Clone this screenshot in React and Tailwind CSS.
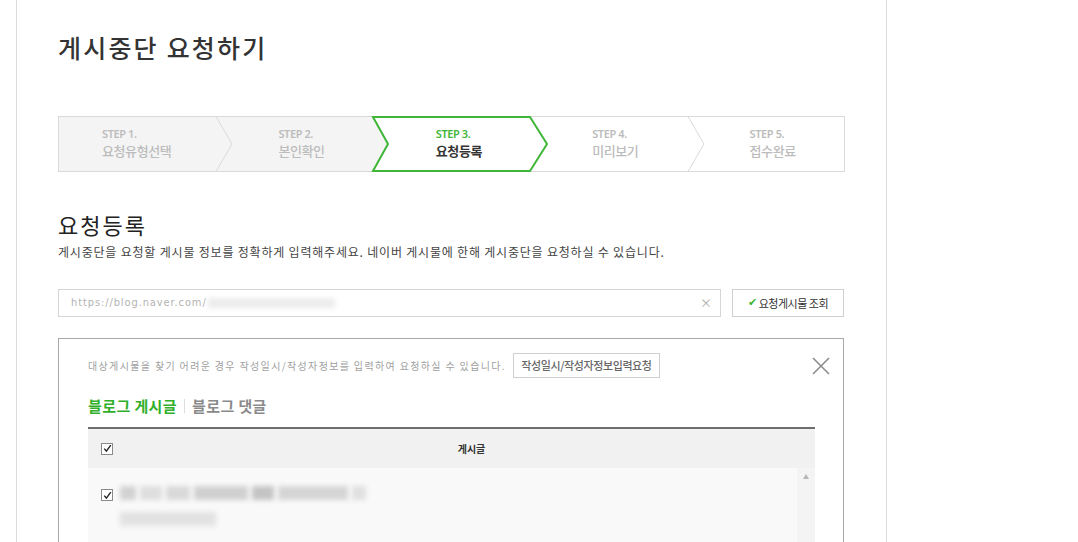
import React from "react";

const steps = [
  { no: "STEP 1.", name: "요청유형선택", pl: "pl-[44px]" },
  { no: "STEP 2.", name: "본인확인", pl: "pl-[63px]" },
  { no: "STEP 3.", name: "요청등록", pl: "pl-[63px]", active: true },
  { no: "STEP 4.", name: "미리보기", pl: "pl-[62px]" },
  { no: "STEP 5.", name: "접수완료", pl: "pl-[62px]" },
];

function StepBar() {
  return (
    <div className="relative h-[56px] w-[787px]">
      {/* chevron background */}
      <svg className="absolute inset-0" width="787" height="56" viewBox="0 0 787 56">
        <polygon points="0.5,0.5 315,0.5 330,28 315,55.5 0.5,55.5" fill="#f4f4f4" />
        <rect x="0.5" y="0.5" width="786" height="55" fill="none" stroke="#dadada" />
        <polyline points="158,0.5 174,28 158,55.5" fill="none" stroke="#dadada" />
        <polyline points="630,0.5 646,28 630,55.5" fill="none" stroke="#dadada" />
        <polygon
          points="315,1 472,1 489,28 472,55 315,55 330,28"
          fill="#fff"
          stroke="#3fb638"
          strokeWidth="2"
        />
      </svg>
      <div className="relative flex h-full">
        {steps.map((s) => (
          <div key={s.no} className={`flex w-[157.4px] shrink-0 flex-col pt-[11px] ${s.pl}`}>
            <span
              className={`text-[11px] font-semibold leading-[14px] tracking-[-0.4px] font-['Noto_Sans',sans-serif] ${
                s.active ? "text-[#3fb638]" : "text-[#bcbcbc]"
              }`}
            >
              {s.no}
            </span>
            <span
              className={`text-[13px] leading-[19px] tracking-[-0.4px] ${
                s.active ? "font-bold text-[#333]" : "font-medium text-[#bcbcbc]"
              }`}
            >
              {s.name}
            </span>
          </div>
        ))}
      </div>
    </div>
  );
}

function CheckBox() {
  return (
    <span className="flex h-[12px] w-[12px] items-center justify-center border border-[#8a8a8a] bg-white">
      <svg width="9" height="9" viewBox="0 0 9 9">
        <path d="M1.3 4.6 L3.4 7.2 L7.8 1.2" fill="none" stroke="#222" strokeWidth="1.4" />
      </svg>
    </span>
  );
}

function Blur({ w, c = "#c9c9c9" }) {
  return <span className={`h-[14px] blur-[2.5px] ${w} ${c}`} />;
}

export default function App() {
  return (
    <div className="h-[542px] w-[1078px] overflow-hidden bg-white font-['Noto_Sans_CJK_KR',sans-serif] text-[#333]">
      <div className="ml-[16px] min-h-[542px] w-[871px] border-x border-[#dcdcdc] pl-[41px]">
        <h1 className="pt-[29px] text-[25px] font-medium leading-[36px] tracking-[2.2px] text-[#333]">
          게시중단 요청하기
        </h1>

        <div className="mt-[51px]">
          <StepBar />
        </div>

        <h2 className="mt-[37px] text-[22px] font-normal leading-[30px] tracking-[2px] text-[#222]">요청등록</h2>
        <p className="mt-[5px] text-[12px] leading-[16px] tracking-[0.8px] text-[#444]">
          게시중단을 요청할 게시물 정보를 정확하게 입력해주세요. 네이버 게시물에 한해 게시중단을 요청하실 수 있습니다.
        </p>

        <div className="mt-[29px] flex w-[787px] items-center gap-[11px]">
          <div className="flex h-[28px] w-[663px] items-center border border-[#d6d6d6] pl-[12px] pr-[8px]">
            <span className="text-[11px] tracking-[0.9px] text-[#b3b3b3] font-['DejaVu_Sans_Condensed',sans-serif]">
              https://blog.naver.com/
            </span>
            <span className="ml-[1px] h-[10px] w-[127px] bg-[#ececec] blur-[2.5px]" />
            <span className="ml-auto text-[12px] text-[#aaa]">×</span>
          </div>
          <button className="flex h-[28px] w-[112px] items-center justify-center border border-[#d0d0d0] bg-white text-[11px] tracking-[-0.5px] text-[#333]">
            <span className="mr-[2px] text-[11px] text-[#3fb638] font-['DejaVu_Sans',sans-serif]">✔</span>
            요청게시물 조회
          </button>
        </div>

        <div className="mt-[21px] w-[786px] border border-[#a8a8a8] pb-[40px]">
          <div className="flex items-center pl-[29px] pr-[13px] pt-[14px]">
            <span className="text-[10px] tracking-[1.35px] text-[#a0a0a0]">
              대상게시물을 찾기 어려운 경우 작성일시/작성자정보를 입력하여 요청하실 수 있습니다.
            </span>
            <button className="ml-[7px] flex h-[25px] w-[147px] items-center justify-center border border-[#cfcfcf] bg-white text-[11px] font-medium tracking-[-0.4px] text-[#666]">
              작성일시/작성자정보입력요청
            </button>
            <svg className="ml-auto" width="18" height="18" viewBox="0 0 18 18">
              <path d="M1 1 L17 17 M17 1 L1 17" stroke="#8c8c8c" strokeWidth="1.6" />
            </svg>
          </div>

          <div className="mt-[18px] flex items-center pl-[29px] text-[15px] font-bold leading-[20px] tracking-[0.4px]">
            <span className="text-[#2faf2a]">블로그 게시글</span>
            <span className="mx-[7px] h-[14px] w-px bg-[#ddd]" />
            <span className="font-semibold text-[#8a8a8a]">블로그 댓글</span>
          </div>

          <div className="ml-[29px] mt-[11px] w-[727px] border-t-2 border-[#6e6e6e]">
            <div className="flex h-[39px] items-center bg-[#f1f1f1]">
              <div className="flex w-[40px] pl-[13px]">
                <CheckBox />
              </div>
              <div className="flex-1 text-center text-[10px] font-bold text-[#333]">게시글</div>
            </div>
            <div className="flex h-[80px] bg-[#f9f9f9]">
              <div className="flex w-[32px] pl-[13px] pt-[21px]">
                <CheckBox />
              </div>
              <div className="flex flex-col gap-[12px] pt-[18px]">
                <div className="flex items-center gap-[4px]">
                  <Blur w="w-[16px]" c="bg-[#d2d2d2]" />
                  <Blur w="w-[22px]" c="bg-[#dedede]" />
                  <Blur w="w-[24px]" c="bg-[#d9d9d9]" />
                  <Blur w="w-[54px]" c="bg-[#d0d0d0]" />
                  <Blur w="w-[22px]" c="bg-[#c4c4c4]" />
                  <Blur w="w-[70px]" c="bg-[#d5d5d5]" />
                  <Blur w="w-[14px]" c="bg-[#e0e0e0]" />
                </div>
                <div className="flex items-center">
                  <Blur w="w-[96px]" c="bg-[#e2e2e2]" />
                </div>
              </div>
              <div className="ml-auto flex w-[18px] justify-center bg-[#f4f4f4] pt-[6px]">
                <span className="h-0 w-0 border-x-[3px] border-b-[5px] border-x-transparent border-b-[#b5b5b5]" />
              </div>
            </div>
          </div>
        </div>
      </div>
    </div>
  );
}
